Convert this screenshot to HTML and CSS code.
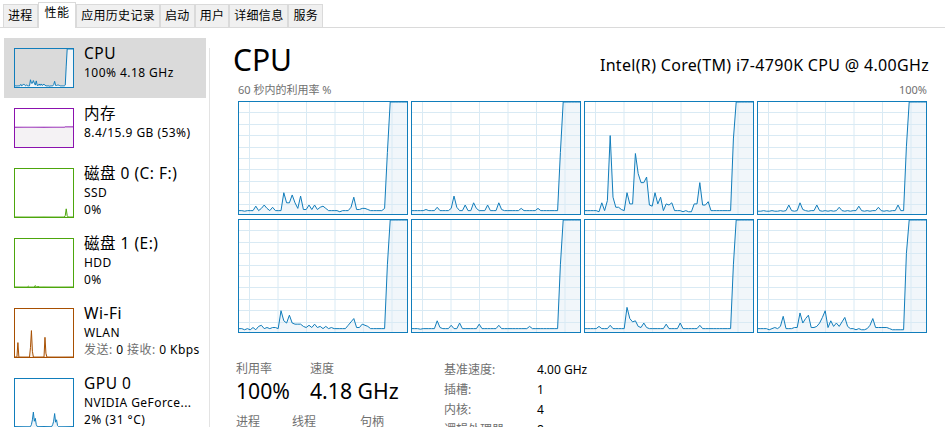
FILE: index.html
```html
<!DOCTYPE html>
<html lang="zh-CN">
<head>
<meta charset="utf-8">
<title>任务管理器 - 性能</title>
<link rel="stylesheet" href="styles.css">
</head>
<body>
<div class="tabs">
  <div class="tab">进程</div>
  <div class="tab active">性能</div>
  <div class="tab">应用历史记录</div>
  <div class="tab">启动</div>
  <div class="tab">用户</div>
  <div class="tab">详细信息</div>
  <div class="tab">服务</div>
</div>
<div class="main">
  <div class="sidebar">
    <div class="list">
      <div class="item selected">
        <svg class="chart thumb cpu" width="60" height="40" data-values="3 3 2.5 3 3 3 7 3 5 8 5 3 6 3 3 3 19 10 10 17 10 5 16 4 4 8 4 8 4 6 7 5 3 3 3 3 2 3 3 3 6 15 4 4 5 5 4 3 3 3 3 3 5 55 100 100 100 100 100 100 100"></svg>
        <div class="info">
          <div class="name">CPU</div>
          <div class="sub">100% 4.18 GHz</div>
        </div>
      </div>
      <div class="item">
        <svg class="chart thumb mem" width="60" height="40" data-values="52 52 52 52 52 52 52 52 52 52 52 52 52 52 52 52 52 52 52 52 52 52 52 52 52 52 52 52 52 52 52 52 52 52 52 52 52 52 52 52 52 52 52 52 52 52 52 52 52 52 52 52 53 53 53 53 53 53 53 53 53"></svg>
        <div class="info">
          <div class="name">内存</div>
          <div class="sub">8.4/15.9 GB (53%)</div>
        </div>
      </div>
      <div class="item">
        <svg class="chart thumb tall disk" width="60" height="50" data-values="0 0 0 0 0 0 0 0 0 0 0 0 0 0 0 0 0 0 0 0 0 0 0 0 0 0 0 0 0 0 0 0 0 0 0 0 0 0 0 0 0 0 0 0 0 0 0 0 0 0 0 0 3 17 3 0 0 0 0 0 0"></svg>
        <div class="info">
          <div class="name">磁盘 0 (C: F:)</div>
          <div class="sub">SSD</div>
          <div class="sub">0%</div>
        </div>
      </div>
      <div class="item">
        <svg class="chart thumb tall disk" width="60" height="50" data-values="0 0 0 0 0 0 0 0 0 0 0 0 0 0 2 0 0 0 0 0 0 3 0 0 2 0 0 0 0 0 0 0 0 0 0 0 0 0 0 0 0 0 0 0 0 0 0 0 0 0 0 0 0 0 0 0 0 0 0 0 0"></svg>
        <div class="info">
          <div class="name">磁盘 1 (E:)</div>
          <div class="sub">HDD</div>
          <div class="sub">0%</div>
        </div>
      </div>
      <div class="item">
        <svg class="chart thumb tall net" width="60" height="50" data-values="0 0 0 30 0 0 0 0 0 0 0 0 0 0 0 0 20 55 12 0 0 0 0 0 0 0 0 0 0 0 0 41 8 0 0 0 0 0 0 0 0 0 0 0 0 0 0 0 0 0 0 0 0 0 0 0 0 0 0 0 0"></svg>
        <div class="info">
          <div class="name">Wi-Fi</div>
          <div class="sub">WLAN</div>
          <div class="sub"><span class="dim">发送:</span> 0 <span class="dim">接收:</span> 0 Kbps</div>
        </div>
      </div>
      <div class="item">
        <svg class="chart thumb tall gpu" width="60" height="50" data-values="1 1 1 1 1 1 1 1 1 1 1 1 1 1 1 1 1 5 15 31 12 18 5 1 1 1 1 1 1 1 1 1 1 1 1 1 1 1 1 5 12 28 10 15 3 1 1 1 1 1 1 1 1 1 1 1 1 1 1 1 1"></svg>
        <div class="info">
          <div class="name">GPU 0</div>
          <div class="sub">NVIDIA GeForce...</div>
          <div class="sub">2% (31 °C)</div>
        </div>
      </div>
    </div>
    <div class="divider"></div>
  </div>

  <div class="content">
    <div class="head">
      <h1>CPU</h1>
      <div class="model">Intel(R) Core(TM) i7-4790K CPU @ 4.00GHz</div>
    </div>
    <div class="axis">
      <span>60 秒内的利用率 %</span>
      <span>100%</span>
    </div>
    <div class="graphs">
      <svg class="chart graph cpu" width="170" height="114" data-values="3 3 2.5 3 3 3 7 3 5 8 5 3 6 3 3 3 19 10 10 17 10 5 16 4 4 8 4 8 4 6 7 5 3 3 3 3 2 3 3 3 6 15 4 4 5 5 4 3 3 3 3 3 5 55 100 100 100 100 100 100 100"></svg>
      <svg class="chart graph cpu" width="170" height="114" data-values="3 3 3 3 3 4 3 3 3 6 3 3 3 3 5 16 6 3 3 8 3 3 10 5 3 3 3 8 3 3 3 10 4 3 3 3 3 3 3 5 3 3 3 3 3 5 3 3 3 3 3 3 3 55 100 100 100 100 100 100 100"></svg>
      <svg class="chart graph cpu" width="170" height="114" data-values="3 3 3 3 3 2 10 3 12 70 15 6 6 4 3 19 9 9 54 36 28 28 33 8 7 19 9 15 3 9 8 10 3 3 3 2 3 2 2 9 9 28 8 8 11 3 3 3 3 3 3 3 3 67 100 100 100 100 100 100 100"></svg>
      <svg class="chart graph cpu" width="170" height="114" data-values="2.5 2.5 3 2.5 2.5 3 2.5 2.5 3 2.5 3 8 3 2.5 3 10 4 3 2.5 3 3 8 3 2.5 3 2.5 3 2.5 3 6 3 2.5 3 2.5 3 3 7 3 2.5 3 2.5 3 3 6 3 2.5 3 2.5 3 3 8 3 3 60 100 100 100 100 100 100 100"></svg>
      <svg class="chart graph cpu" width="170" height="114" data-values="3 3 2 3 2 4 2 5 6 3 4 3 4 4 3 19 10 8 15 8 7 7 7 5 4 6 4 7 4 5 3 5 3 4 3 3 3 3 3 6 9 12 4 4 7 6 5 3 3 3 3 3 3 60 100 100 100 100 100 100 100"></svg>
      <svg class="chart graph cpu" width="170" height="114" data-values="3 3 3 2.5 3 3 3 3 3 10 4 3 3 3 6 3 3 8 3 3 3 3 3 3 7 3 3 3 3 3 3 6 3 3 3 3 3 3 3 3 3 3 5 3 3 3 3 3 3 3 3 3 3 60 100 100 100 100 100 100 100"></svg>
      <svg class="chart graph cpu" width="170" height="114" data-values="3 3 3 3 3 5 3 3 3 6 3 3 3 3 3 22 12 9 10 5 4 8 4 3 3 3 3 3 3 7 3 3 3 3 8 3 3 3 3 3 3 6 3 3 3 3 3 3 3 3 3 3 3 60 100 100 100 100 100 100 100"></svg>
      <svg class="chart graph cpu" width="170" height="114" data-values="3 3 3 3 2 3 4 3 5 14 3 3 3 4 4 17 8 12 15 4 4 5 8 13 19 4 10 5 8 5 9 13 5 3 3 2 3 2 2 3 6 12 4 4 4 4 4 3 2 2 2 2 2 70 100 100 100 100 100 100 100"></svg>
    </div>
    <div class="stats">
      <div class="live">
        <div class="row">
          <div class="stat col-util">
            <div class="label">利用率</div>
            <div class="value">100%</div>
          </div>
          <div class="stat">
            <div class="label">速度</div>
            <div class="value">4.18 GHz</div>
          </div>
        </div>
        <div class="row row-counts">
          <div class="stat col-proc"><div class="label">进程</div></div>
          <div class="stat col-thread"><div class="label">线程</div></div>
          <div class="stat"><div class="label">句柄</div></div>
        </div>
      </div>
      <dl class="specs">
        <dt>基准速度:</dt><dd>4.00 GHz</dd>
        <dt>插槽:</dt><dd>1</dd>
        <dt>内核:</dt><dd>4</dd>
        <dt>逻辑处理器:</dt><dd>8</dd>
      </dl>
    </div>
  </div>
</div>
<script src="app.js"></script>
</body>
</html>
```

FILE: styles.css
```css
* { box-sizing: border-box; }

html, body {
  margin: 0;
  height: 100%;
  overflow: hidden;
}

body {
  background: #fff;
  color: #000;
  font-family: "Noto Sans", "Noto Sans CJK SC", sans-serif;
  font-size: 12px;
}

/* ---------- tabs ---------- */
.tabs {
  display: flex;
  align-items: flex-end;
  height: 28px;
  padding-left: 3px;
  border-bottom: 1px solid #dadada;
}

.tab {
  height: 23px;
  padding: 0 4px;
  border: 1px solid #dadada;
  border-bottom: 0;
  background: #f0f0f0;
  font-size: 12px;
  line-height: 22px;
  letter-spacing: 0.3px;
  white-space: nowrap;
}

.tab.active {
  position: relative;
  height: 26px;
  margin-bottom: -1px;
  padding: 0 6px;
  background: #fff;
  line-height: 19px;
}

/* ---------- layout ---------- */
.main {
  display: flex;
  height: calc(100% - 28px);
}

.sidebar {
  display: flex;
  flex: none;
  width: 210px;
}

.list {
  width: 206px;
  padding: 10px 0 0 4px;
}

.divider {
  width: 1px;
  margin: 20px 0 0 3px;
  background: #e3e3e3;
}

.item {
  display: flex;
  gap: 10px;
  padding: 10px;
}

.item.selected { background: #dadada; }

.thumb { flex: none; display: block; }

.info {
  margin-top: -5px;
  white-space: nowrap;
}

.name {
  font-size: 15.5px;
  line-height: 20.5px;
  letter-spacing: 0.5px;
}

.sub {
  font-size: 12px;
  line-height: 17px;
  letter-spacing: 0.45px;
}

.dim { color: #707070; }

/* ---------- content ---------- */
.content {
  flex: 1;
  min-width: 0;
  padding: 14px 16px 0 25px;
}

.head {
  display: flex;
  justify-content: space-between;
  align-items: baseline;
  height: 36px;
}

.head h1 {
  margin: 0 0 0 -2px;
  font-size: 30px;
  line-height: 36px;
  font-weight: 400;
}

.model {
  font-size: 16px;
  line-height: 20px;
  letter-spacing: 0.32px;
}

.axis {
  display: flex;
  justify-content: space-between;
  width: 689px;
  margin: 4px 0 0 3px;
  font-size: 11px;
  line-height: 16px;
  color: #707070;
}

.graphs {
  display: grid;
  grid-template-columns: repeat(4, 170px);
  gap: 4px 3px;
  margin: 3px 0 0 3px;
}

.graph { display: block; }

/* ---------- charts ---------- */
.chart .area { stroke: none; }
.chart .line { fill: none; stroke-width: 1; stroke-linejoin: round; }
.chart .frame { fill: none; stroke-width: 1; }
.chart .grid { stroke: #d9eaf4; stroke-width: 1; }

.cpu .area, .gpu .area { fill: #f1f6fa; }
.cpu .line, .cpu .frame, .gpu .line, .gpu .frame { stroke: #117dbb; }

.mem .area { fill: #f4f2f4; }
.mem .line, .mem .frame { stroke: #8b12ae; }

.disk .area { fill: #eff7e7; }
.disk .line, .disk .frame { stroke: #4da60c; }

.net .area { fill: #fcf3eb; }
.net .line, .net .frame { stroke: #a74f01; }

/* ---------- stats ---------- */
.stats {
  display: flex;
  margin: 28px 0 0 1px;
}

.live { width: 208px; flex: none; }

.row { display: flex; }
.row-counts { margin-top: 9px; }

.col-util { width: 74px; }
.col-proc { width: 56px; }
.col-thread { width: 68px; }

.label {
  font-size: 12px;
  line-height: 16px;
  color: #707070;
}

.value {
  font-size: 21.2px;
  line-height: 28px;
}

.specs {
  display: grid;
  grid-template-columns: 93px auto;
  grid-auto-rows: 20px;
  margin: -1px 0 0;
  font-size: 12px;
  line-height: 20px;
}

.specs dt { color: #707070; }
.specs dd { margin: 0; }
```

FILE: app.js
```js
(function () {
  var NS = 'http://www.w3.org/2000/svg';

  function add(parent, tag, attrs) {
    var node = document.createElementNS(NS, tag);
    Object.keys(attrs).forEach(function (k) { node.setAttribute(k, attrs[k]); });
    parent.appendChild(node);
    return node;
  }

  var charts = document.querySelectorAll('svg.chart');
  Array.prototype.forEach.call(charts, function (svg) {
    var w = +svg.getAttribute('width');
    var h = +svg.getAttribute('height');
    var vals = svg.getAttribute('data-values').trim().split(/\s+/).map(Number);
    var n = vals.length - 1;
    svg.setAttribute('viewBox', '0 0 ' + w + ' ' + h);

    var pts = vals.map(function (v, i) {
      var x = 1 + i * (w - 2) / n;
      var y = (h - 1) - v / 100 * (h - 2);
      return x.toFixed(2) + ',' + y.toFixed(2);
    }).join(' ');

    add(svg, 'polygon', { 'class': 'area', points: '1,' + (h - 1) + ' ' + pts + ' ' + (w - 1) + ',' + (h - 1) });

    if (svg.classList.contains('graph')) {
      for (var gx = 11.5; gx < w - 1; gx += 28.5) {
        add(svg, 'line', { 'class': 'grid', x1: gx, y1: 1, x2: gx, y2: h - 1 });
      }
      for (var k = 1; k < 10; k++) {
        var gy = Math.round(k * h / 10) + 0.5;
        add(svg, 'line', { 'class': 'grid', x1: 1, y1: gy, x2: w - 1, y2: gy });
      }
    }

    add(svg, 'polyline', { 'class': 'line', points: pts });
    add(svg, 'rect', { 'class': 'frame', x: 0.5, y: 0.5, width: w - 1, height: h - 1 });
  });
})();
```
